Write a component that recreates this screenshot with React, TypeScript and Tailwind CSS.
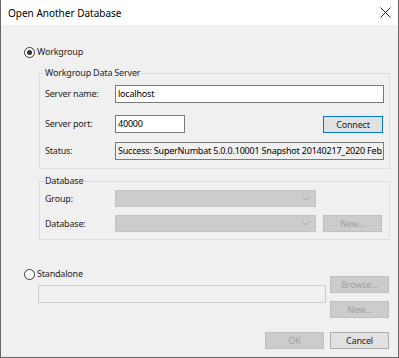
import React from "react"

const font = "font-['Noto_Sans',sans-serif] text-[9px] leading-[16px] tracking-[-0.2px]"

function Radio({ checked, label }: { checked?: boolean; label: string }) {
  return (
    <div className="flex items-center h-[16px]">
      <span className="w-[11px] h-[11px] rounded-full border border-[#333333] bg-white flex items-center justify-center">
        {checked && <span className="w-[5px] h-[5px] rounded-full bg-[#333333]" />}
      </span>
      <span className="ml-[2px] text-[#1e1e1e]">{label}</span>
    </div>
  )
}

function Btn({
  label,
  disabled,
  active,
  className = "",
}: {
  label: string
  disabled?: boolean
  active?: boolean
  className?: string
}) {
  const look = disabled
    ? "bg-[#cccccc] border-[#bfbfbf] text-[#a0a0a0]"
    : active
    ? "bg-[#e1e1e1] border-[#0078d7] text-[#1e1e1e]"
    : "bg-[#e1e1e1] border-[#adadad] text-[#1e1e1e]"
  return (
    <div className={`h-[17px] w-[59px] border flex items-center justify-center ${look} ${className}`}>
      {label}
    </div>
  )
}

function Combo() {
  return (
    <div className="h-[17px] w-[201px] bg-[#cccccc] border border-[#c4c4c4] flex items-center justify-end pr-[5px]">
      <svg width="8" height="5" viewBox="0 0 8 5" className="text-[#a6a6a6]">
        <path d="M0.5 0.5 L4 4 L7.5 0.5" fill="none" stroke="currentColor" strokeWidth="1" />
      </svg>
    </div>
  )
}

function Label({ children }: { children: React.ReactNode }) {
  return <div className="w-[70px] shrink-0 text-[#1e1e1e]">{children}</div>
}

export default function App() {
  return (
    <div className={`w-[399px] h-[358px] bg-[#f0f0f0] border-x border-b border-[#666666] flex flex-col ${font}`}>
      {/* title bar */}
      <div className="h-[25px] bg-white flex items-center justify-between pl-[7px] pr-[7px] shrink-0">
        <span className="text-[10px] tracking-normal text-black">Open Another Database</span>
        <svg width="11" height="11" viewBox="0 0 11 11">
          <path d="M0.5 0.5 L10.5 10.5 M10.5 0.5 L0.5 10.5" stroke="#222" strokeWidth="1" />
        </svg>
      </div>

      <div className="flex flex-col pl-[23px] pr-[8px]">
        <div className="mt-[19px]">
          <Radio checked label="Workgroup" />
        </div>

        <fieldset className="ml-[15px] mt-[5px] border border-[#dcdcdc] px-[5px] pb-[8px]">
          <legend className="-ml-[1px] px-[1px] text-[#1e1e1e]">Workgroup Data Server</legend>
          <div className="flex items-center mt-[4px]">
            <Label>Server name:</Label>
            <div className="flex-1 min-w-0 h-[18px] bg-white border border-[#7a7a7a] flex items-center pl-[2px] text-black">
              localhost
            </div>
          </div>
          <div className="flex items-center mt-[11px]">
            <Label>Server port:</Label>
            <div className="w-[70px] h-[18px] bg-white border border-[#7a7a7a] flex items-center pl-[2px] text-black">
              40000
            </div>
            <Btn label="Connect" active className="ml-auto mr-[1px] mt-[2px] w-[60px]" />
          </div>
          <div className="flex items-center mt-[9px]">
            <Label>Status:</Label>
            <div className="flex-1 min-w-0 h-[18px] bg-[#f0f0f0] border border-[#7a7a7a] flex items-center pl-[2px] text-black whitespace-nowrap overflow-hidden">
              Success: SuperNumbat 5.0.0.10001 Snapshot 20140217_2020 Feb
            </div>
          </div>
        </fieldset>

        <fieldset className="ml-[15px] mt-[4px] border border-[#dcdcdc] px-[5px] pb-[7px]">
          <legend className="-ml-[1px] px-[1px] text-[#1e1e1e]">Database</legend>
          <div className="flex items-center mt-[1px]">
            <Label>Group:</Label>
            <Combo />
          </div>
          <div className="flex items-center mt-[8px]">
            <Label>Database:</Label>
            <Combo />
            <Btn label="New..." disabled className="ml-[7px]" />
          </div>
        </fieldset>

        <div className="flex mt-[26px]">
          <div className="flex-1 flex flex-col">
            <Radio label="Standalone" />
            <div className="ml-[14px] mt-[3px] h-[18px] bg-[#f0f0f0] border border-[#cccccc]" />
          </div>
          <div className="flex flex-col ml-[4px] mr-[1px] mt-[10px] gap-[8px]">
            <Btn label="Browse..." disabled />
            <Btn label="New..." disabled />
          </div>
        </div>

        <div className="flex justify-end gap-[6px] mr-[1px] mt-[14px]">
          <Btn label="OK" disabled />
          <Btn label="Cancel" />
        </div>
      </div>
    </div>
  )
}
